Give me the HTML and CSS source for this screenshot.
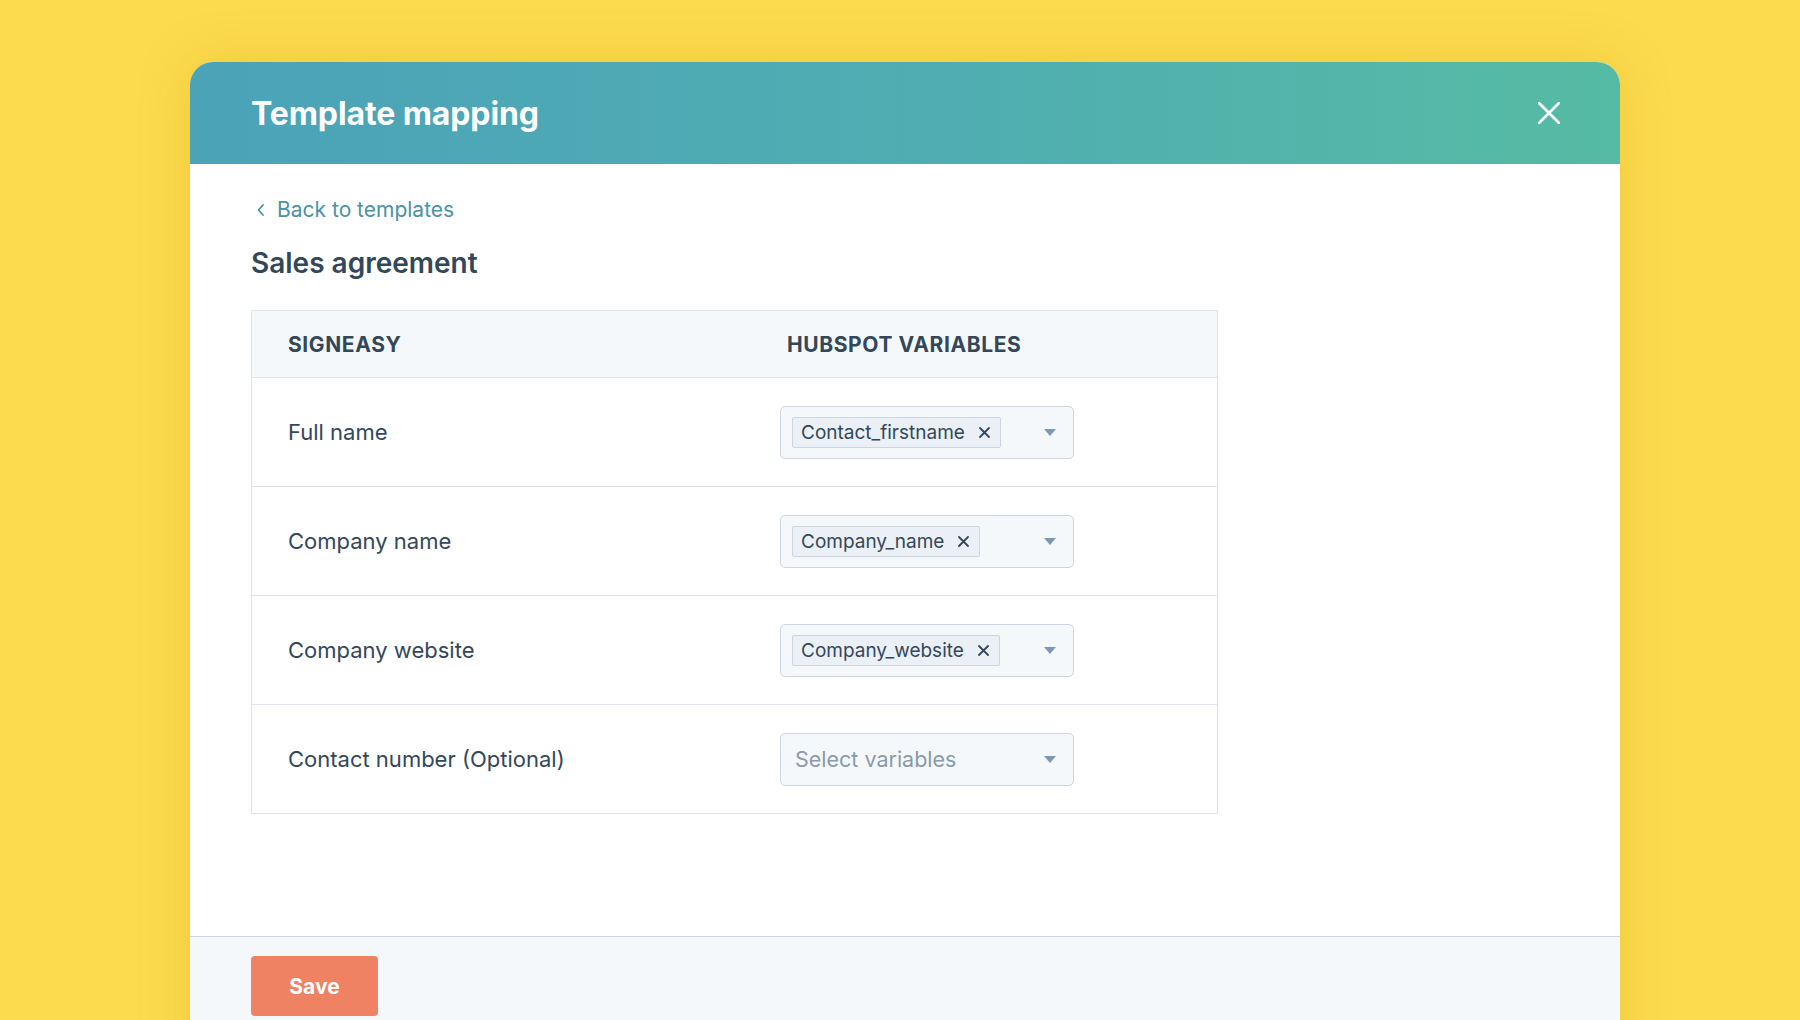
FILE: index.html
```html
<!DOCTYPE html>
<html lang="en">
<head>
    <meta charset="UTF-8">
    <meta name="viewport" content="width=device-width, initial-scale=1.0">
    <title>Template mapping</title>
    <link rel="stylesheet" href="styles.css">
</head>
<body>
    <div class="modal">
        <div class="modal-header">
            <h1>Template mapping</h1>
            <button class="close-button" aria-label="Close">
                <svg width="22" height="22" viewBox="0 0 22 22"><path d="M1 1L21 21M21 1L1 21" stroke="#fff" stroke-width="2.6" stroke-linecap="round"/></svg>
            </button>
        </div>
        <div class="modal-body">
            <a class="back-link" href="#">
                <svg width="10" height="14" viewBox="0 0 10 14"><path d="M7 2L2.5 7L7 12" fill="none" stroke="#4a92a8" stroke-width="1.8" stroke-linecap="round" stroke-linejoin="round"/></svg>
                Back to templates
            </a>
            <h2>Sales agreement</h2>
            <div class="mapping-table">
                <div class="table-row table-head">
                    <div class="col-left">SIGNEASY</div>
                    <div class="col-right">HUBSPOT VARIABLES</div>
                </div>
                <div class="table-row">
                    <div class="col-left">Full name</div>
                    <div class="col-right">
                        <div class="select">
                            <span class="tag">Contact_firstname
                                <svg class="tag-x" width="11" height="11" viewBox="0 0 11 11"><path d="M1 1L10 10M10 1L1 10" stroke="#33475b" stroke-width="1.8" stroke-linecap="round"/></svg>
                            </span>
                            <span class="caret"></span>
                        </div>
                    </div>
                </div>
                <div class="table-row">
                    <div class="col-left">Company name</div>
                    <div class="col-right">
                        <div class="select">
                            <span class="tag">Company_name
                                <svg class="tag-x" width="11" height="11" viewBox="0 0 11 11"><path d="M1 1L10 10M10 1L1 10" stroke="#33475b" stroke-width="1.8" stroke-linecap="round"/></svg>
                            </span>
                            <span class="caret"></span>
                        </div>
                    </div>
                </div>
                <div class="table-row">
                    <div class="col-left">Company website</div>
                    <div class="col-right">
                        <div class="select">
                            <span class="tag">Company_website
                                <svg class="tag-x" width="11" height="11" viewBox="0 0 11 11"><path d="M1 1L10 10M10 1L1 10" stroke="#33475b" stroke-width="1.8" stroke-linecap="round"/></svg>
                            </span>
                            <span class="caret"></span>
                        </div>
                    </div>
                </div>
                <div class="table-row">
                    <div class="col-left">Contact number (Optional)</div>
                    <div class="col-right">
                        <div class="select">
                            <span class="placeholder">Select variables</span>
                            <span class="caret"></span>
                        </div>
                    </div>
                </div>
            </div>
        </div>
        <div class="modal-footer">
            <button class="save-button">Save</button>
        </div>
    </div>
</body>
</html>
```

FILE: styles.css
```css
body {
    font-family: Inter, "Noto Sans", sans-serif;
    margin: 0;
    height: 100vh;
    overflow: hidden;
    background-color: #fcdb4e;
    color: #33475b;
}
.modal {
    width: 1430px;
    margin: 62px 0 0 190px;
    background-color: white;
    border-radius: 23px 23px 0 0;
    box-shadow: 0 0 50px rgba(200, 150, 0, 0.25);
    overflow: hidden;
}
.modal-header {
    height: 102px;
    display: flex;
    align-items: center;
    justify-content: space-between;
    padding: 0 60px 0 61px;
    background: linear-gradient(90deg, #4ba3b8 0%, #4fadb2 50%, #56bba4 100%);
}
.modal-header h1 {
    margin: 0;
    color: white;
    font-size: 32px;
    font-weight: 700;
    letter-spacing: -0.1px;
}
.close-button {
    background: none;
    border: none;
    padding: 0;
    width: 22px;
    height: 22px;
    cursor: pointer;
}
.close-button svg {
    display: block;
}
.modal-body {
    height: 772px;
    box-sizing: border-box;
    padding: 33px 61px 0;
}
.back-link {
    display: inline-flex;
    align-items: center;
    gap: 11px;
    margin-left: 5px;
    color: #4a92a8;
    font-size: 21px;
    text-decoration: none;
}
.modal-body h2 {
    margin: 24px 0 30px;
    font-size: 28px;
    font-weight: 600;
    color: #33475b;
}
.mapping-table {
    width: 967px;
    border: 1px solid #dfe3eb;
    box-sizing: border-box;
}
.table-row {
    display: grid;
    grid-template-columns: 492px 1fr;
    align-items: center;
    height: 108px;
    padding-left: 36px;
    border-top: 1px solid #dfe3eb;
    font-size: 22px;
}
.table-head {
    height: 66px;
    border-top: none;
    background-color: #f5f8fa;
    font-size: 21px;
    font-weight: 700;
    letter-spacing: 0.6px;
}
.table-head .col-right {
    padding-left: 7px;
}
.select {
    width: 294px;
    height: 53px;
    box-sizing: border-box;
    display: flex;
    align-items: center;
    padding: 0 17px 0 11px;
    background-color: #f5f8fa;
    border: 1.5px solid #cbd6e2;
    border-radius: 5px;
}
.tag {
    display: inline-flex;
    align-items: center;
    gap: 14px;
    height: 31px;
    box-sizing: border-box;
    padding: 0 10px 0 8px;
    background-color: #eaf0f6;
    border: 1px solid #cbd6e2;
    border-radius: 2px;
    font-size: 19px;
    color: #33475b;
}
.tag-x {
    display: block;
}
.placeholder {
    padding-left: 3px;
    font-size: 21.5px;
    color: #8a9aab;
}
.caret {
    margin-left: auto;
    width: 0;
    height: 0;
    border-left: 6px solid transparent;
    border-right: 6px solid transparent;
    border-top: 7px solid #7c98b6;
}
.modal-footer {
    height: 100px;
    padding: 19px 61px;
    background-color: #f5f8fa;
    border-top: 1.5px solid #cbd6e2;
}
.save-button {
    width: 127px;
    height: 60px;
    border: none;
    border-radius: 4px;
    background-color: #ee8262;
    color: white;
    font-family: inherit;
    font-size: 21px;
    font-weight: 700;
    cursor: pointer;
}
```
